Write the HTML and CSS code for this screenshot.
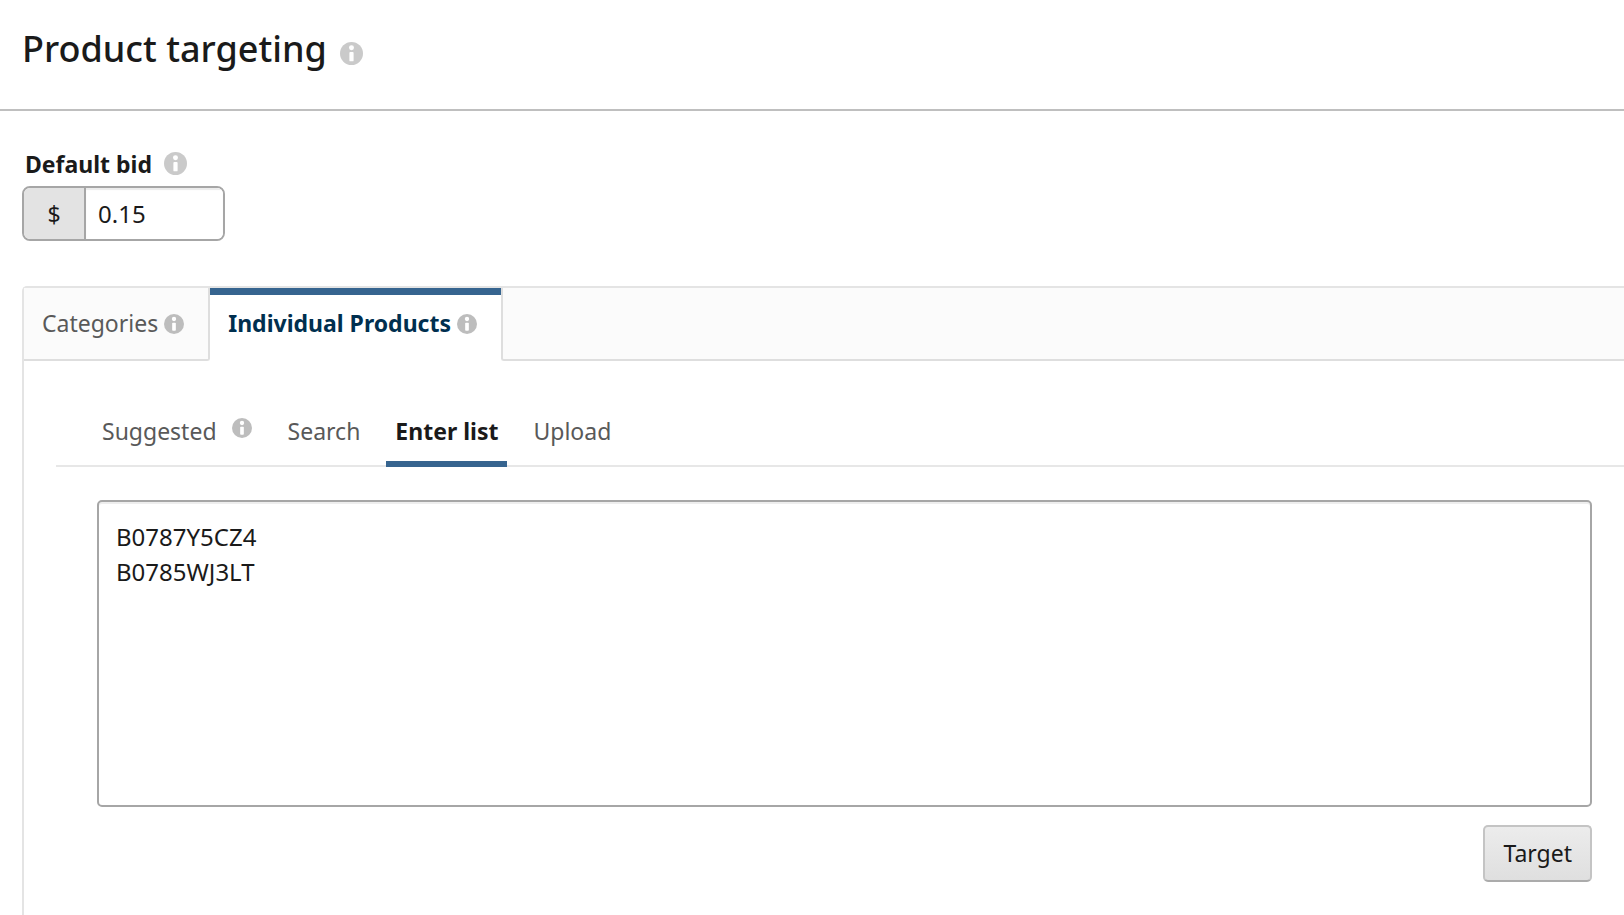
FILE: index.html
```html
<!DOCTYPE html>
<html lang="en">
<head>
<meta charset="utf-8">
<meta name="viewport" content="width=device-width, initial-scale=1">
<title>Product targeting</title>
<link rel="stylesheet" href="styles.css">
</head>
<body>
<svg class="sprite" aria-hidden="true">
  <symbol id="info" viewBox="0 0 24 24">
    <circle cx="12" cy="12" r="12" fill="currentColor"/>
    <circle cx="12" cy="6" r="2.6" fill="#fff"/>
    <rect x="9.8" y="10.4" width="4.4" height="9.8" rx="1" fill="#fff"/>
  </symbol>
</svg>
<header class="header">
  <h1 class="title">Product targeting</h1>
  <svg class="info info-large" role="img" aria-label="More information"><use href="#info"/></svg>
</header>
<main class="content">
  <section class="bid">
    <div class="bid-heading">
      <label class="bid-label" for="bid">Default bid</label>
      <svg class="info info-large" role="img" aria-label="More information"><use href="#info"/></svg>
    </div>
    <div class="bid-field">
      <span class="currency">$</span>
      <input class="bid-input" id="bid" type="text" value="0.15">
    </div>
  </section>
  <section class="panel">
    <div class="tabs" role="tablist">
      <button class="tab" type="button" role="tab" aria-selected="false">Categories <svg class="info" aria-hidden="true"><use href="#info"/></svg></button>
      <button class="tab tab-active" type="button" role="tab" aria-selected="true">Individual Products <svg class="info" aria-hidden="true"><use href="#info"/></svg></button>
      <div class="tabs-rest"></div>
    </div>
    <div class="panel-body">
      <nav class="subtabs">
        <a class="subtab" href="#suggested">Suggested <svg class="info info-raised" aria-hidden="true"><use href="#info"/></svg></a>
        <a class="subtab" href="#search">Search</a>
        <a class="subtab subtab-active" href="#list" aria-current="page">Enter list</a>
        <a class="subtab" href="#upload">Upload</a>
      </nav>
      <form class="entry">
        <textarea class="list" aria-label="Product list" spellcheck="false">B0787Y5CZ4
B0785WJ3LT</textarea>
        <button class="target" type="button">Target</button>
      </form>
    </div>
  </section>
</main>
</body>
</html>
```
FILE: styles.css
```css
* { box-sizing: border-box; }
body {
  margin: 0;
  min-height: 100vh;
  display: flex;
  flex-direction: column;
  overflow-x: hidden;
  background: #fff;
  color: #1a1a1a;
  font-family: "Noto Sans", "Open Sans", sans-serif;
  font-size: 23px;
  line-height: 35px;
}
button, input, textarea { font: inherit; color: inherit; margin: 0; }
.sprite { position: absolute; width: 0; height: 0; }
.info { flex: none; width: 20px; height: 20px; color: #bdbdbd; }
.info-large { width: 23px; height: 23px; color: #cacaca; }
.header {
  display: flex;
  align-items: center;
  gap: 13px;
  padding: 22px 22px 33px;
  border-bottom: 2px solid #bfbfbf;
}
.header .info { margin-top: 8px; }
.title { margin: 0; font-size: 36px; line-height: 54px; font-weight: 500; }
.content { flex: 1; display: flex; flex-direction: column; padding: 36px 0 0 22px; }
.bid-heading { display: flex; gap: 12px; height: 35px; padding-left: 3px; }
.bid-heading .info { margin-top: 5px; }
.bid-label { font-weight: 700; }
.bid-field {
  display: flex;
  width: 203px;
  height: 55px;
  margin-top: 4px;
  border: 2px solid #a6a6a6;
  border-radius: 8px;
  overflow: hidden;
}
.currency {
  flex: none;
  width: 62px;
  line-height: 52px;
  text-align: center;
  background: #e3e3e3;
  border-right: 2px solid #a6a6a6;
}
.bid-input {
  flex: 1;
  min-width: 0;
  padding: 0 12px;
  border: 0;
  outline: 0;
  font-size: 24px;
  background: #fff;
  box-shadow: inset 0 2px 1px #ececec;
}
.panel {
  flex: 1;
  margin-top: 45px;
  border: solid #e4e4e4;
  border-width: 2px 0 0 2px;
  border-top-left-radius: 5px;
}
.tabs { display: flex; height: 73px; }
.tab, .tabs-rest { background: #fbfbfb; border: 0 solid #dedede; border-bottom-width: 2px; }
.tab {
  display: flex;
  align-items: center;
  gap: 6px;
  padding: 0 24px 0 18px;
  color: #595959;
  border-right-width: 2px;
  border-bottom-right-radius: 3px;
}
.tab-active {
  padding-bottom: 9px;
  background: #fff;
  border-top: 7px solid #36648f;
  border-width: 7px 0 0;
  border-radius: 0;
  color: #002f4f;
  font-weight: 700;
}
.tabs-rest { flex: 1; border-left-width: 2px; border-bottom-left-radius: 3px; }
.panel-body { padding: 40px 0 33px 32px; }
.subtabs { display: flex; gap: 16px; height: 66px; padding-left: 36px; border-bottom: 2px solid #e7e7e7; }
.subtab {
  display: flex;
  height: 66px;
  padding: 13px 10px 0;
  color: #595959;
  text-decoration: none;
}
.subtab-active { padding: 13px 9px 0; color: #1a1a1a; font-weight: 700; border-bottom: 6px solid #36648f; }
.info-raised { margin: 4px 0 0 15px; }
.entry { display: flex; flex-direction: column; align-items: flex-end; gap: 18px; padding: 33px 32px 0 41px; }
.list {
  display: block;
  width: 100%;
  height: 307px;
  padding: 17px;
  border: 2px solid #a6a6a6;
  border-radius: 5px;
  outline: 0;
  resize: none;
  background: #fff;
  box-shadow: inset 0 2px 0 #eee;
  font-size: 24px;
}
.target {
  height: 57px;
  padding: 0 18px;
  border: 2px solid #c4c4c4;
  border-bottom-color: #ababab;
  border-radius: 5px;
  background: linear-gradient(#ececec, #dfdfdf);
}
```
